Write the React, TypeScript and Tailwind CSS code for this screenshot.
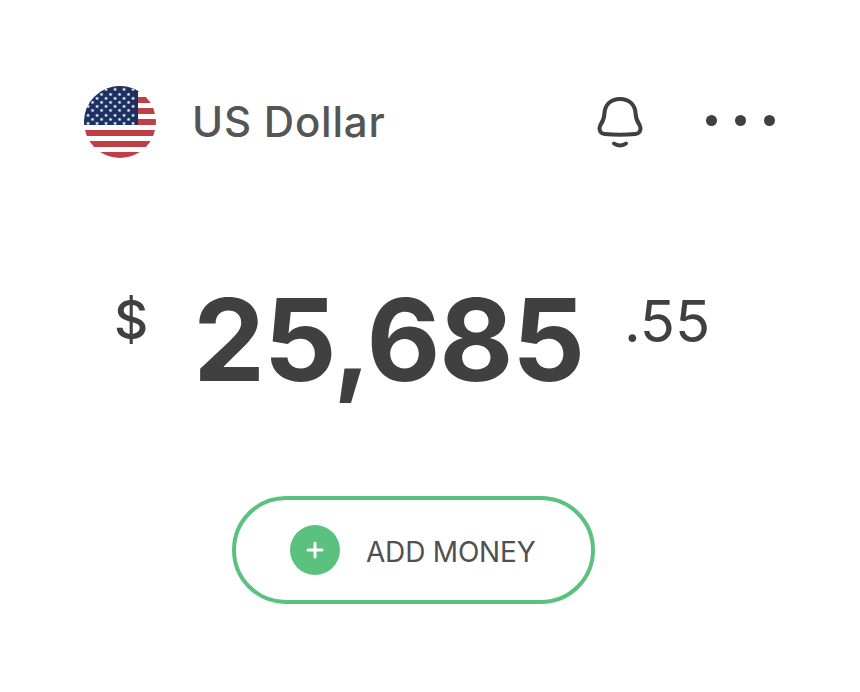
const stripes = [0, 1, 2, 3, 4, 5, 6];

function Flag() {
  const stars: [number, number][] = [];
  for (let row = 0; row < 9; row++) {
    const odd = row % 2 === 1;
    for (let col = 0; col < (odd ? 5 : 6); col++) {
      stars.push([(odd ? 8.5 : 4) + col * 9, 3.5 + row * 4.2]);
    }
  }
  return (
    <svg width="72" height="72" viewBox="0 0 72 72" className="shrink-0">
      <defs>
        <clipPath id="flag-circle">
          <circle cx="36" cy="36" r="36" />
        </clipPath>
      </defs>
      <g clipPath="url(#flag-circle)">
        <rect width="72" height="72" fill="#ffffff" />
        {stripes.map((i) => (
          <rect key={i} x="0" y={i * 11} width="72" height="6" fill="#bf3f47" />
        ))}
        <rect x="0" y="0" width="54" height="39" fill="#1c3163" />
        {stars.map(([x, y], i) => (
          <text key={i} x={x} y={y + 1.8} fontSize="5" fill="#ffffff" textAnchor="middle" fontFamily="DejaVu Sans">
            ★
          </text>
        ))}
      </g>
    </svg>
  );
}

function Bell() {
  return (
    <svg width="46" height="54" viewBox="0 0 46 54" fill="none" stroke="#404040" strokeWidth="4" strokeLinecap="round" strokeLinejoin="round">
      <path d="M23 4C13 4 8 10.500 7.500 18C7.200 22.500 6.500 25.500 4 29C1.500 32.500 2 38.500 7.500 39C17 40 29 40 38.500 39C44 38.500 44.500 32.500 42 29C39.500 25.500 38.800 22.500 38.500 18C38 10.500 33 4 23 4Z" />
      <path d="M17 48.500C20 51 26 51 29 48.500" />
    </svg>
  );
}

export default function App() {
  return (
    <div className="h-[692px] w-[860px] bg-white font-['Inter',sans-serif]">
      <div className="flex items-center pl-[84px] pr-[85px] pt-[86px]">
        <Flag />
        <span className="ml-[36px] text-[42px] font-medium leading-[72px] tracking-[0.8px] text-[#555555]">US Dollar</span>
        <div className="ml-auto flex items-center">
          <Bell />
          <div className="mb-[4px] ml-[63px] flex gap-[18px]">
            <span className="size-[11px] rounded-full bg-[#404040]" />
            <span className="size-[11px] rounded-full bg-[#404040]" />
            <span className="size-[11px] rounded-full bg-[#404040]" />
          </div>
        </div>
      </div>

      <div className="mt-[122px] flex items-start pl-[114px] text-[#404040]">
        <span className="mt-[8px] text-[53px] font-medium leading-[64px]">$</span>
        <span className="ml-[45px] text-[114px] font-bold leading-[120px] tracking-[-1.2px]">25,685</span>
        <span className="ml-[40px] mt-[9px] text-[58px] font-normal leading-[64px]">.55</span>
      </div>

      <div className="mt-[96px] flex justify-center pr-[33px]">
        <button className="flex h-[108px] w-[363px] items-center rounded-full border-[4px] border-[#5bc17f] pl-[54px]">
          <span className="flex size-[50px] items-center justify-center rounded-full bg-[#5bc17f]">
            <svg width="18" height="18" viewBox="0 0 18 18" stroke="#ffffff" strokeWidth="3" strokeLinecap="round">
              <path d="M9 2V16M2 9H16" />
            </svg>
          </span>
          <span className="ml-[26px] mt-[3px] text-[28px] font-normal tracking-[-0.2px] text-[#505050]">ADD MONEY</span>
        </button>
      </div>
    </div>
  );
}
